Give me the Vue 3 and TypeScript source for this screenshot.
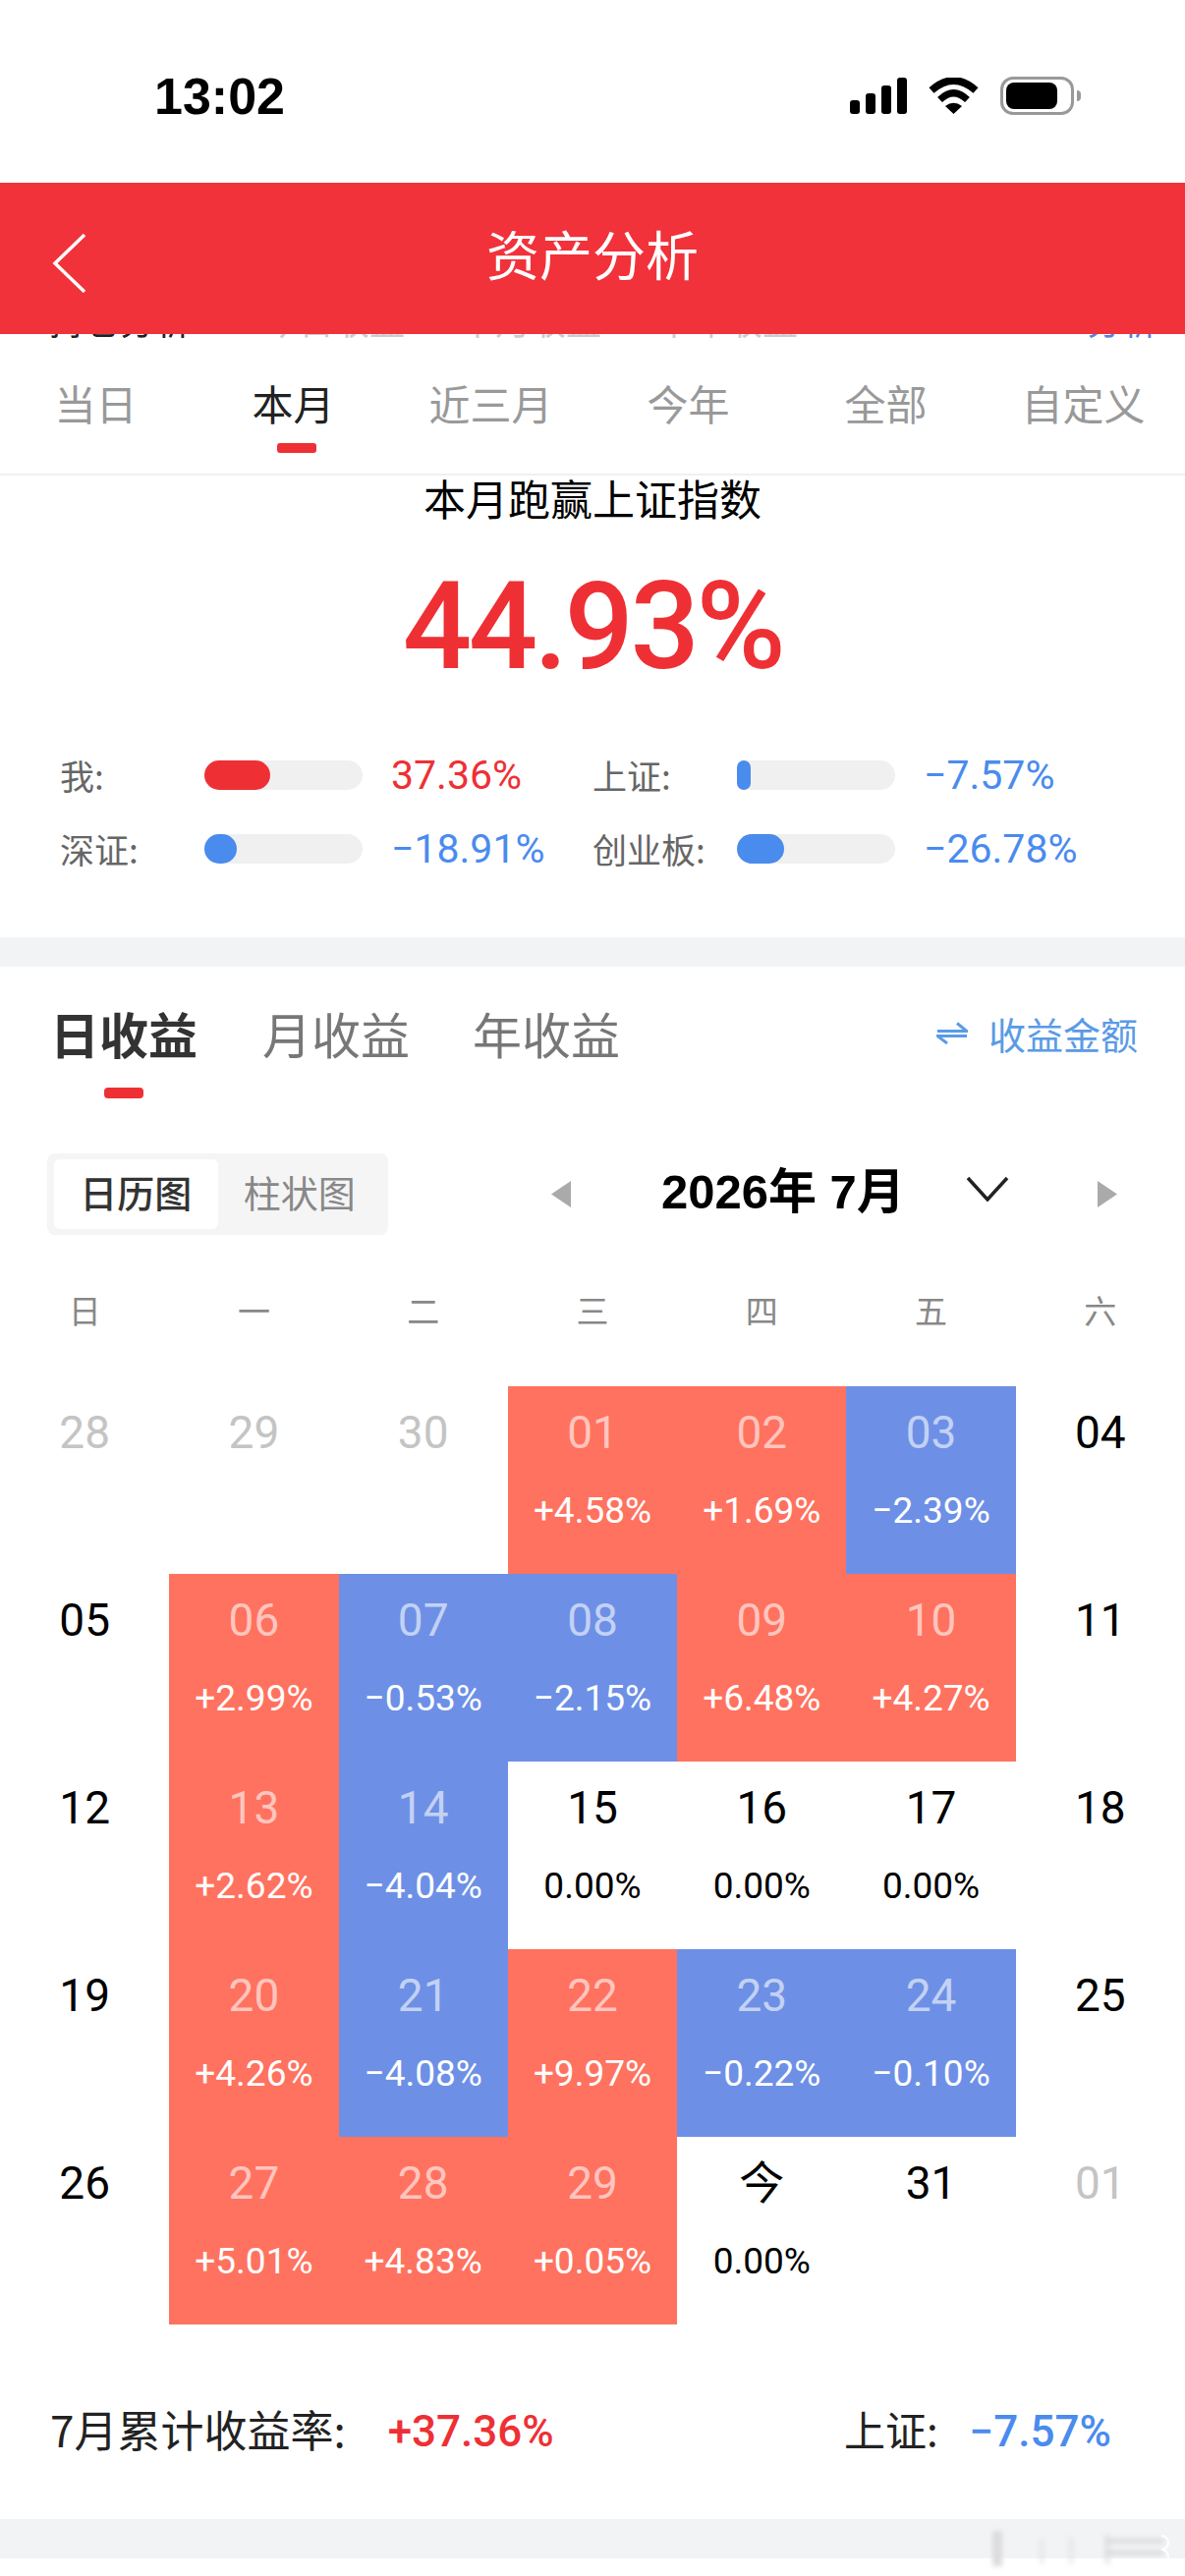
<script setup lang="ts">
interface Stat { label: string; value: string; width: number; up: boolean }
interface Day { day: string; pct?: string; kind: 'up' | 'down' | 'flat' | 'muted' | 'plain' }

const periods = ['当日', '本月', '近三月', '今年', '全部', '自定义']
const stats: Stat[] = [
  { label: '我:', value: '37.36%', width: 67, up: true },
  { label: '上证:', value: '−7.57%', width: 14, up: false },
  { label: '深证:', value: '−18.91%', width: 33, up: false },
  { label: '创业板:', value: '−26.78%', width: 48, up: false },
]
const weekdays = ['日', '一', '二', '三', '四', '五', '六']

// 颜色由正负号决定，0.00% 走默认黑字
const cell = (day: string, pct: string): Day => ({
  day,
  pct,
  kind: pct.startsWith('+') ? 'up' : pct.startsWith('−') ? 'down' : 'flat',
})
const plain = (day: string): Day => ({ day, kind: 'plain' })
const muted = (day: string): Day => ({ day, kind: 'muted' })

const days: Day[] = [
  muted('28'), muted('29'), muted('30'), cell('01', '+4.58%'), cell('02', '+1.69%'), cell('03', '−2.39%'), plain('04'),
  plain('05'), cell('06', '+2.99%'), cell('07', '−0.53%'), cell('08', '−2.15%'), cell('09', '+6.48%'), cell('10', '+4.27%'), plain('11'),
  plain('12'), cell('13', '+2.62%'), cell('14', '−4.04%'), cell('15', '0.00%'), cell('16', '0.00%'), cell('17', '0.00%'), plain('18'),
  plain('19'), cell('20', '+4.26%'), cell('21', '−4.08%'), cell('22', '+9.97%'), cell('23', '−0.22%'), cell('24', '−0.10%'), plain('25'),
  plain('26'), cell('27', '+5.01%'), cell('28', '+4.83%'), cell('29', '+0.05%'), cell('今', '0.00%'), plain('31'), muted('01'),
]
</script>

<template>
  <div class="page">
    <div class="status">
      <span class="time">13:02</span>
      <div class="status-icons">
        <svg width="58" height="37" viewBox="0 0 58 37" fill="#000">
          <rect x="0" y="23" width="10" height="14" rx="3" />
          <rect x="16" y="16" width="10" height="21" rx="3" />
          <rect x="32" y="8" width="10" height="29" rx="3" />
          <rect x="48" y="0" width="10" height="37" rx="3" />
        </svg>
        <svg class="wifi" width="51" height="37" viewBox="0 0 51 37">
          <path d="M3 13Q25.500 -7 48 13" fill="none" stroke="#000" stroke-width="7.500" />
          <path d="M11.500 22.500Q25.500 9 39.500 22.500" fill="none" stroke="#000" stroke-width="7" />
          <path d="M17 29Q25.500 22.500 34 29L25.500 37Z" fill="#000" />
        </svg>
        <div class="battery"><div class="battery-level"></div></div>
        <div class="battery-nub"></div>
      </div>
    </div>

    <header class="topbar">
      <svg class="back" width="36" height="62" viewBox="0 0 36 62">
        <path d="M33 2L3 31L33 60" fill="none" stroke="#fff" stroke-width="3.500" />
      </svg>
      <h1>资产分析</h1>
    </header>

    <div class="clipped">
      <span class="clip-title">持仓分析</span>
      <span class="clip-chip">今日收益</span>
      <span class="clip-chip">本月收益</span>
      <span class="clip-chip">本年收益</span>
      <span class="clip-link">分析</span>
    </div>

    <nav class="periods">
      <div v-for="(p, i) in periods" :key="p" class="period" :class="{ active: i === 1 }">{{ p }}</div>
    </nav>

    <section class="summary">
      <div class="summary-title">本月跑赢上证指数</div>
      <div class="summary-num">44.93%</div>
      <div class="stats">
        <div v-for="s in stats" :key="s.label" class="stat">
          <span class="stat-label">{{ s.label }}</span>
          <span class="track">
            <span class="fill" :class="s.up ? 'bg-up' : 'bg-down'" :style="{ width: s.width + 'px' }"></span>
          </span>
          <span class="stat-value" :class="s.up ? 'c-up' : 'c-down'">{{ s.value }}</span>
        </div>
      </div>
    </section>

    <div class="band"></div>

    <section class="earnings">
      <div class="earn-tabs">
        <div class="earn-tab active">日收益</div>
        <div class="earn-tab">月收益</div>
        <div class="earn-tab">年收益</div>
        <div class="earn-switch">
          <svg width="32" height="23" viewBox="0 0 32 23" fill="none" stroke="#5a9be6" stroke-width="3">
            <path d="M1 9.500H31L21 1.500" />
            <path d="M31 14.500H1L11 22" />
          </svg>
          <span>收益金额</span>
        </div>
      </div>

      <div class="controls">
        <div class="segment">
          <div class="seg on">日历图</div>
          <div class="seg">柱状图</div>
        </div>
        <svg class="caret-l" width="20" height="27" viewBox="0 0 20 27"><path d="M20 0V27L0 13.500Z" fill="#aaa" /></svg>
        <div class="month">2026年 7月</div>
        <svg class="chev" width="44" height="26" viewBox="0 0 44 26">
          <path d="M2 2L22 24L42 2" fill="none" stroke="#222" stroke-width="3.500" />
        </svg>
        <svg class="caret-r" width="20" height="27" viewBox="0 0 20 27"><path d="M0 0V27L20 13.500Z" fill="#aaa" /></svg>
      </div>

      <div class="weekdays">
        <div v-for="w in weekdays" :key="w">{{ w }}</div>
      </div>

      <div class="calendar">
        <div v-for="(d, i) in days" :key="i" class="day" :class="d.kind">
          <div class="day-num">{{ d.day }}</div>
          <div v-if="d.pct" class="day-pct">{{ d.pct }}</div>
        </div>
      </div>

      <div class="totals">
        <span class="total-label">7月累计收益率:</span>
        <span class="total-value c-up">+37.36%</span>
        <span class="total-label index">上证:</span>
        <span class="total-value c-down">−7.57%</span>
      </div>
    </section>

    <div class="band bottom"></div>

    <!-- 右下角被抹掉的水印残影 -->
    <svg class="smudge" width="190" height="54" viewBox="0 0 190 54">
      <defs><filter id="soft"><feGaussianBlur stdDeviation="2.500" /></filter></defs>
      <g filter="url(#soft)" fill="#dcdcde">
        <rect x="8" y="4" width="10" height="36" />
        <rect x="55" y="12" width="6" height="26" opacity=".4" />
        <rect x="85" y="10" width="6" height="28" opacity=".4" />
        <rect x="122" y="8" width="6" height="30" opacity=".6" />
        <rect x="122" y="12" width="60" height="5" />
        <rect x="122" y="24" width="60" height="5" />
      </g>
      <path d="M180 9a7 7 0 0 1 0 14a7 7 0 0 1 0 14" fill="none" stroke="#fff" stroke-width="2" />
    </svg>
  </div>
</template>

<style scoped>
.page {
  position: relative;
  width: 1206px;
  height: 2622px;
  overflow: hidden;
  background: #fff;
  color: #000;
  font-family: "Noto Sans CJK SC", "Liberation Sans", sans-serif;
}

.status {
  height: 186px;
  display: flex;
  justify-content: space-between;
  padding: 72px 106px 0 157px;
  box-sizing: border-box;
}
.time {
  font: 700 52px/52px "Liberation Sans", sans-serif;
}
.status-icons {
  display: flex;
  align-items: flex-start;
  padding-top: 7px;
}
.wifi {
  margin-left: 22px;
}
.battery {
  margin: -1px 0 0 22px;
  width: 75px;
  height: 39px;
  box-sizing: border-box;
  border: 3px solid #999;
  border-radius: 13px;
  padding: 3px;
}
.battery-level {
  width: 52px;
  height: 27px;
  background: #000;
  border-radius: 8px;
}
.battery-nub {
  margin: 13px 0 0 3px;
  width: 4px;
  height: 11px;
  background: #999;
  border-radius: 0 4px 4px 0;
}

.topbar {
  position: relative;
  height: 154px;
  background: #f1323a;
  display: flex;
  align-items: center;
  justify-content: center;
  padding-bottom: 10px;
  box-sizing: border-box;
}
.topbar h1 {
  margin: 0;
  color: #fff;
  font-size: 54px;
  font-weight: 400;
  line-height: 72px;
}
.back {
  position: absolute;
  left: 53px;
  top: 51px;
}

.clipped {
  height: 5px;
  overflow: hidden;
  display: flex;
  align-items: flex-end;
  font-size: 36px;
  line-height: 40px;
  padding-left: 50px;
  color: #bbb;
}
.clipped span {
  flex: none;
}
.clip-title {
  color: #222;
  width: 218px;
}
.clip-chip {
  width: 200px;
  color: #ccc;
}
.clip-link {
  margin-left: 238px;
  color: #5a7fe0;
}

.periods {
  height: 139px;
  box-sizing: border-box;
  border-bottom: 2px solid #f0f0f0;
  display: grid;
  grid-template-columns: repeat(6, 1fr);
}
.period {
  position: relative;
  text-align: center;
  font-size: 42px;
  line-height: 56px;
  padding: 37px 6px 0 0;
  color: #999;
}
.period.active {
  color: #222;
}
.period.active::after {
  content: "";
  position: absolute;
  left: 81px;
  top: 106px;
  width: 40px;
  height: 10px;
  border-radius: 3px;
  background: #ee3035;
}

.summary {
  height: 469px;
  box-sizing: border-box;
  text-align: center;
}
.summary-title {
  font-size: 43px;
  line-height: 43px;
  margin-top: 1px;
}
.summary-num {
  font-family: Roboto, sans-serif;
  font-weight: 500;
  font-size: 124px;
  line-height: 140px;
  letter-spacing: -3.500px;
  color: #ee3035;
  margin-top: 40px;
}
.stats {
  margin-top: 66px;
  padding-left: 61px;
  display: grid;
  grid-template-columns: 542px 1fr;
  row-gap: 45px;
  text-align: left;
}
.stat {
  display: flex;
  align-items: center;
  height: 30px;
}
.stat-label {
  width: 147px;
  font-size: 35px;
  line-height: 30px;
  color: #666;
}
.track {
  width: 161px;
  height: 30px;
  background: #f0f0f0;
  border-radius: 15px;
  flex: none;
}
.fill {
  display: block;
  height: 100%;
  border-radius: 15px;
}
.stat-value {
  margin-left: 29px;
  font-family: Roboto, sans-serif;
  font-size: 41px;
  line-height: 32px;
  white-space: nowrap;
}
.bg-up { background: #ee3035; }
.bg-down { background: #4a8bee; }
.c-up { color: #ee3035; }
.c-down { color: #4a8bee; }

.band {
  height: 30px;
  background: #f2f3f5;
}
.band.bottom {
  height: 40px;
}

.earn-tabs {
  display: flex;
  align-items: center;
  height: 140px;
  padding: 0 48px 6px 51px;
  box-sizing: border-box;
  column-gap: 64px;
}
.earn-tab {
  position: relative;
  font-size: 50px;
  line-height: 60px;
  color: #777;
}
.earn-tab.active {
  color: #333;
  font-weight: 700;
}
.earn-tab.active::after {
  content: "";
  position: absolute;
  left: 55px;
  top: 86px;
  width: 40px;
  height: 11px;
  border-radius: 4px;
  background: #ee3035;
}
.earn-tab + .earn-tab {
  left: 2px;
}
.earn-switch {
  margin-left: auto;
  display: flex;
  align-items: center;
  gap: 21px;
  font-size: 38px;
  color: #5a9be6;
}

.controls {
  display: flex;
  align-items: center;
  height: 83px;
  margin: 50px 0 0 48px;
}
.segment {
  width: 347px;
  height: 83px;
  box-sizing: border-box;
  padding: 6px 7px;
  display: flex;
  background: #f5f5f5;
  border-radius: 8px;
  flex: none;
}
.seg {
  width: 167px;
  height: 71px;
  text-align: center;
  font-size: 38px;
  line-height: 65px;
  color: #888;
}
.seg.on {
  background: #fff;
  color: #333;
  font-weight: 500;
  border-radius: 6px;
}
.caret-l {
  margin-left: 166px;
  flex: none;
}
.month {
  margin: -5px 0 0 92px;
  width: 246px;
  white-space: nowrap;
  font-family: "Liberation Sans", "Noto Sans CJK SC", sans-serif;
  font-weight: 700;
  font-size: 49px;
  line-height: 60px;
}
.chev {
  margin: -11px 0 0 64px;
  flex: none;
}
.caret-r {
  margin-left: 90px;
  flex: none;
}

.weekdays {
  display: grid;
  grid-template-columns: repeat(7, 1fr);
  padding-top: 52px;
  height: 154px;
  box-sizing: border-box;
  text-align: center;
  font-size: 33px;
  line-height: 48px;
  color: #888;
}

.calendar {
  display: grid;
  grid-template-columns: repeat(7, 1fr);
  grid-auto-rows: 191px;
}
.day {
  text-align: center;
  padding-top: 21px;
  box-sizing: border-box;
  font-family: Roboto, "Noto Sans CJK SC", sans-serif;
  color: #000;
}
.day-num {
  font-size: 46px;
  line-height: 52px;
}
.day-pct {
  margin-top: 34px;
  font-size: 37px;
  line-height: 40px;
}
.day.muted {
  color: #c4c4c4;
}
.day.up {
  background: #ff725f;
  color: #fff;
}
.day.down {
  background: #6d90e6;
  color: #fff;
}
.day.up .day-num,
.day.down .day-num {
  color: rgba(255, 255, 255, 0.6);
}

.totals {
  height: 198px;
  box-sizing: border-box;
  padding: 20px 75px 0 51px;
  display: flex;
  align-items: center;
}
.total-label {
  font-size: 44px;
  color: #222;
  line-height: 54px;
  margin-bottom: 6px;
}
.total-label.index {
  margin-left: auto;
  font-size: 42px;
}
.total-value {
  margin-left: 43px;
  font-family: Roboto, sans-serif;
  font-weight: 500;
  font-size: 44px;
  line-height: 60px;
}
.total-label.index + .total-value {
  margin-left: 32px;
}

.smudge {
  position: absolute;
  left: 1002px;
  top: 2572px;
}
</style>

<style>
body {
  background: #fff;
}
</style>
